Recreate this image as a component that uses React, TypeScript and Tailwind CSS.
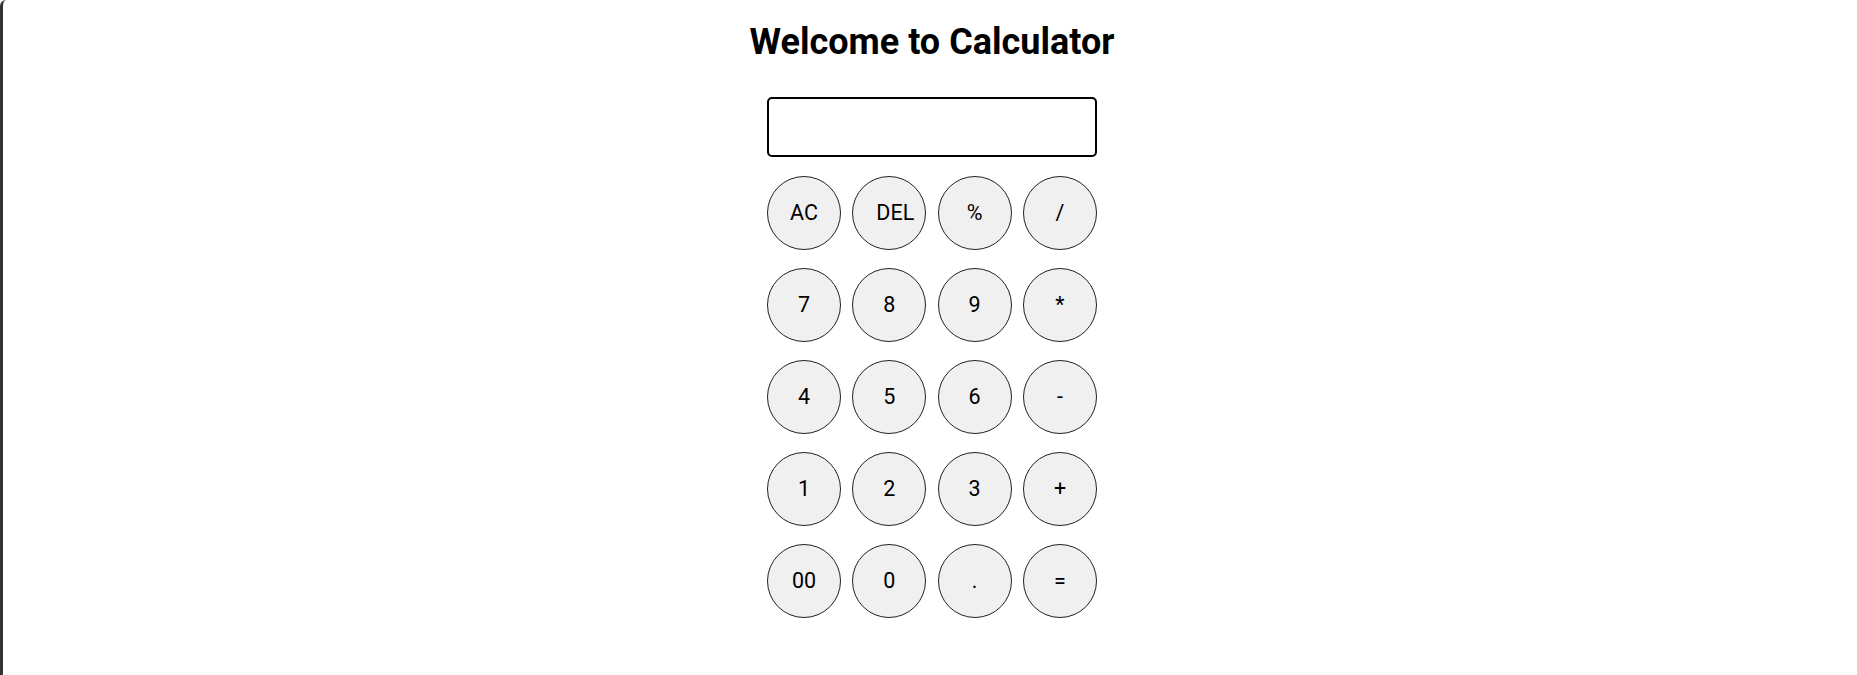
import React, { useState } from 'react'

const keys = [
  'AC', 'DEL', '%', '/',
  '7', '8', '9', '*',
  '4', '5', '6', '-',
  '1', '2', '3', '+',
  '00', '0', '.', '='
]

export default function App() {
  const [value, setValue] = useState('')

  const press = (k: string) => {
    if (k === 'AC') return setValue('')
    if (k === 'DEL') return setValue((v) => v.slice(0, -1))
    if (k === '=') {
      try {
        // eslint-disable-next-line no-new-func
        setValue(String(Function(`return (${value})`)()))
      } catch {
        setValue('Error')
      }
      return
    }
    setValue((v) => v + k)
  }

  return (
    <div
      className="min-h-[675px] rounded-tl-md border-l-[3px] border-[#333] bg-white pl-[4px]"
      style={{ fontFamily: 'Roboto, "Liberation Sans", sans-serif' }}
    >
      <div className="flex flex-col items-center pt-[22px]">
        <h1 className="text-[36px] font-bold leading-[40px] text-black">
          Welcome to Calculator
        </h1>
        <input
          value={value}
          readOnly
          className="mt-[35px] h-[60px] w-[330px] rounded-[5px] border-2 border-black px-3 text-right text-2xl outline-none"
        />
        <div className="mt-[19px] grid w-[330px] grid-cols-[74px_74px_74px_74px] justify-between gap-y-[18px]">
          {keys.map((k) => (
            <button
              key={k}
              onClick={() => press(k)}
              className="flex h-[74px] w-[74px] items-center justify-center rounded-full border border-[#222] bg-[#f0f0f0] text-[21.5px] text-black"
            >
              <span className={k === 'DEL' ? 'ml-3' : ''}>{k}</span>
            </button>
          ))}
        </div>
      </div>
    </div>
  )
}
